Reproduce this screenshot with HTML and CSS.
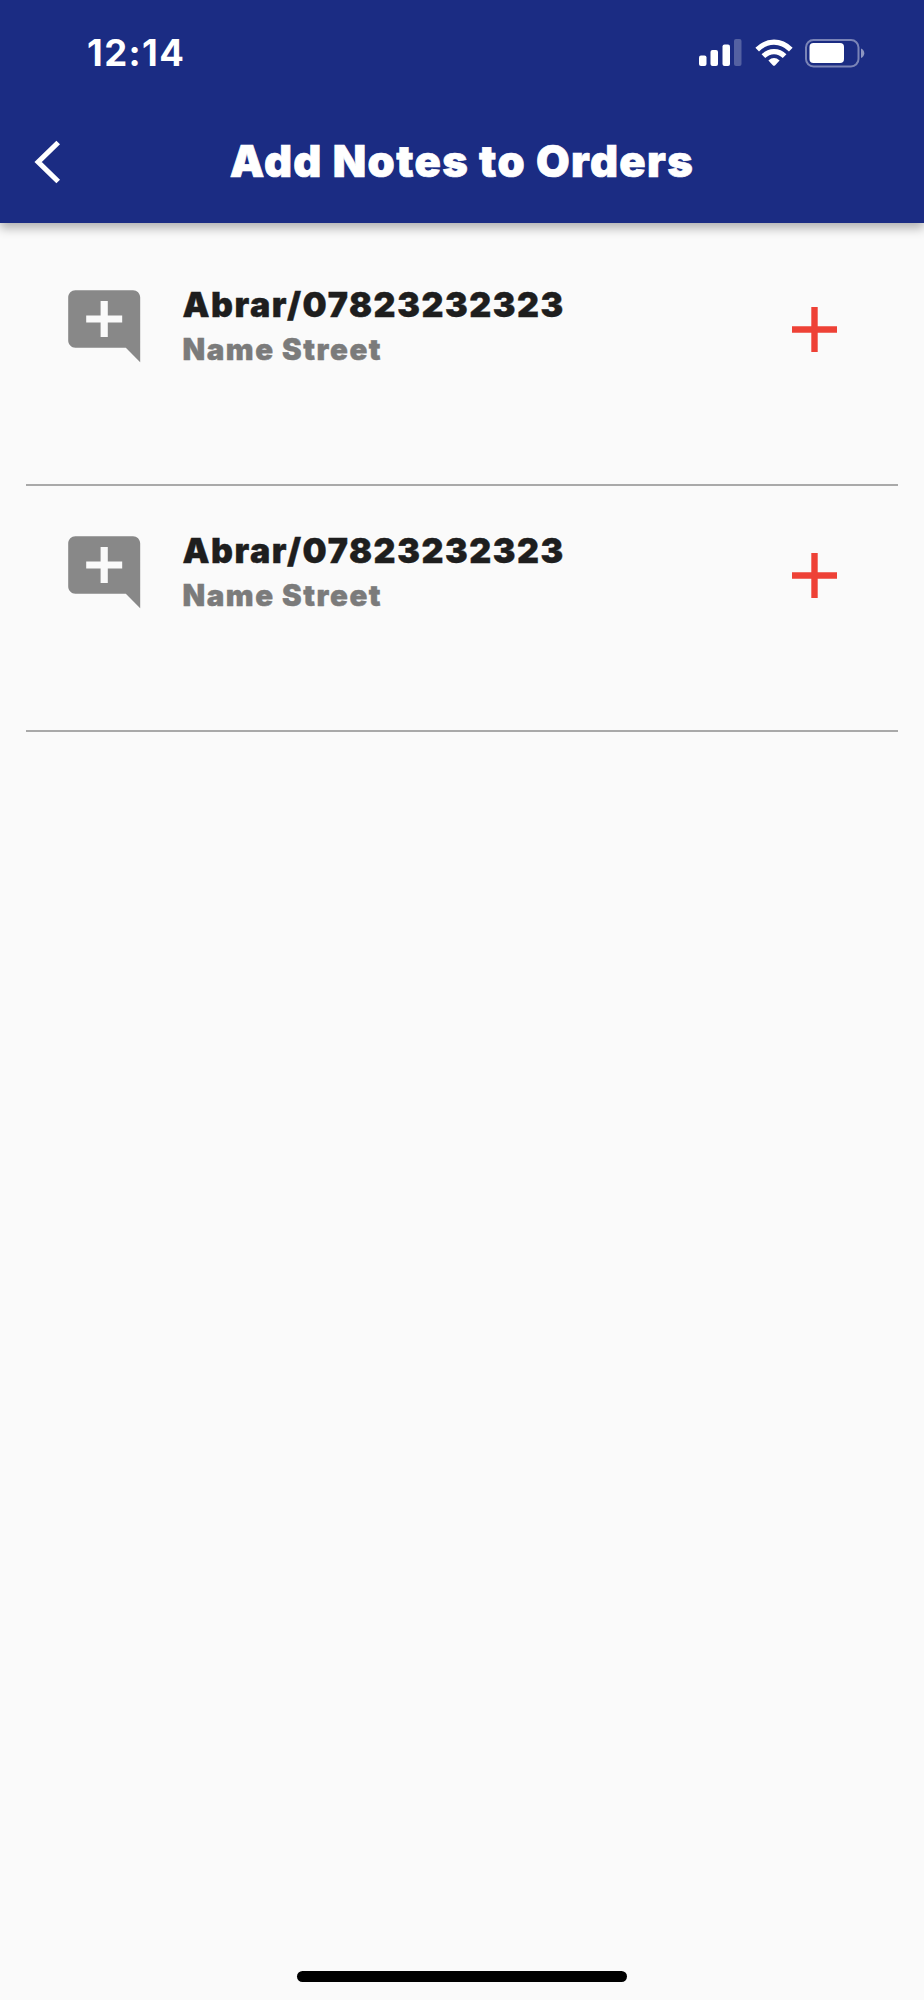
FILE: index.html
```html
<!DOCTYPE html>
<html lang="en">
<head>
<meta charset="utf-8">
<title>Add Notes to Orders</title>
<link rel="stylesheet" href="styles.css">
</head>
<body>
<div class="screen">
  <header class="header">
    <div class="status">
      <span class="time">12:14</span>
      <div class="indicators">
        <svg class="signal" viewBox="0 0 43 28" width="43" height="28"><g fill="#fff"><rect x="0" y="16.5" width="7.5" height="10.5" rx="2"/><rect x="11.5" y="11" width="7.5" height="16" rx="2"/><rect x="23.5" y="5.5" width="7.5" height="21.5" rx="2"/><rect x="35" y="0" width="7.5" height="27" rx="2" opacity=".25"/></g></svg>
        <svg class="wifi" viewBox="0 0 38 28" width="38" height="28"><g fill="none" stroke="#fff" stroke-width="5.2"><path d="M2.2 10.6Q9.8 3.2 19 3.2T35.8 10.6"/><path d="M8.4 17.2Q13 12.6 19 12.6T29.6 17.2"/></g><path d="M13.4 21.4Q19 16.8 24.6 21.4L20.2 26.2Q19 27.4 17.8 26.2Z" fill="#fff"/></svg>
        <svg class="battery" viewBox="0 0 60 29" width="60" height="29"><rect x="1" y="1" width="52.5" height="26.5" rx="7.5" fill="none" stroke="#fff" stroke-width="2" opacity=".42"/><rect x="4.5" y="4" width="34.5" height="20" rx="4" fill="#fff"/><path d="M56 9.5Q59.3 11 59.3 14.2T56 19Z" fill="#fff" opacity=".5"/></svg>
      </div>
    </div>
    <nav class="nav">
      <svg class="back" viewBox="0 0 28 46" width="28" height="46"><path d="M24.2 3.5L4.2 23 24.2 42.5" fill="none" stroke="#fff" stroke-width="5.2"/></svg>
      <h1 class="title">Add Notes to Orders</h1>
      <span class="nav-end"></span>
    </nav>
  </header>
  <main class="orders">
    <section class="order">
      <svg class="comment" viewBox="0 0 24 24"><path d="M22 4c0-1.1-.9-2-2-2H4c-1.1 0-2 .9-2 2v12c0 1.1.9 2 2 2h14l4 4V4zm-5 7h-4v4h-2v-4H7V9h4V5h2v4h4v2z"/></svg>
      <div class="details"><div class="name">Abrar/07823232323</div><div class="street">Name Street</div></div>
      <svg class="add" viewBox="0 0 45 45"><path d="M19.3 0h6.4v19.3H45v6.4H25.7V45h-6.4V25.7H0v-6.4h19.3z"/></svg>
    </section>
    <section class="order">
      <svg class="comment" viewBox="0 0 24 24"><path d="M22 4c0-1.1-.9-2-2-2H4c-1.1 0-2 .9-2 2v12c0 1.1.9 2 2 2h14l4 4V4zm-5 7h-4v4h-2v-4H7V9h4V5h2v4h4v2z"/></svg>
      <div class="details"><div class="name">Abrar/07823232323</div><div class="street">Name Street</div></div>
      <svg class="add" viewBox="0 0 45 45"><path d="M19.3 0h6.4v19.3H45v6.4H25.7V45h-6.4V25.7H0v-6.4h19.3z"/></svg>
    </section>
  </main>
  <div class="home-bar"></div>
</div>
</body>
</html>
```
FILE: styles.css
```css
* { box-sizing: border-box; }
body { margin: 0; background: #fafafa; font-family: Inter, Roboto, sans-serif; }
svg { display: block; flex: none; }
.screen { width: 924px; height: 2000px; display: flex; flex-direction: column; background: #fafafa; }
.header { height: 222.5px; background: #1b2c83; color: #fff; box-shadow: 0 5px 10px rgba(0,0,0,.3); }
.status { height: 106px; display: flex; justify-content: space-between; align-items: center; padding: 0 59px 0 87px; }
.time { font-size: 36.5px; line-height: 44px; font-weight: 750; letter-spacing: 1.4px; }
.indicators { display: flex; align-items: center; }
.wifi { margin-left: 13px; }
.battery { margin-left: 12px; }
.nav { height: 112px; display: flex; align-items: center; padding: 0 34px; }
.back, .nav-end { width: 28px; }
.title { flex: 1; margin: 0; padding-bottom: 1px; text-align: center; font-size: 43.5px; line-height: 51px; font-weight: 900; font-optical-sizing: none; letter-spacing: 1.35px; -webkit-text-stroke: .7px #fff; white-space: nowrap; }
.orders { flex: 1; padding: 14.5px 26px 0; }
.order { height: 246px; display: flex; align-items: flex-start; padding: 43px 61px 0 35px; border-bottom: 2px solid #a9a9a9; }
.order:first-child { height: 249px; padding-top: 46px; }
.comment { width: 86.4px; height: 86.4px; fill: #888; }
.details { flex: 1; margin-left: 35px; font-weight: 860; font-optical-sizing: none; white-space: nowrap; }
.name { font-size: 34px; line-height: 44px; color: #1e1e1e; letter-spacing: 1.55px; -webkit-text-stroke: .4px #1e1e1e; }
.street { font-size: 29.5px; line-height: 45px; color: #7b7b7b; letter-spacing: 1.55px; -webkit-text-stroke: .4px #7b7b7b; }
.add { width: 45px; height: 45px; margin-top: 24px; fill: #ee4136; }
.home-bar { width: 330px; height: 11px; margin: 0 auto 18px; border-radius: 6px; background: #000; }
```
